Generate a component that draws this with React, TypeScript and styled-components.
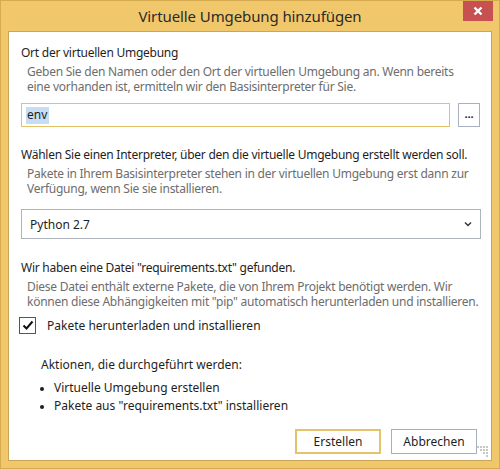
import React from "react";
import styled, { createGlobalStyle } from "styled-components";

const Global = createGlobalStyle`
  html, body { margin: 0; padding: 0; background: #f0c86b; }
  body { font-family: "Segoe UI", "Noto Sans", "Open Sans", sans-serif; }
  * { box-sizing: border-box; }
`;

const Frame = styled.div`
  width: 500px;
  height: 469px;
  background: #f0c86b;
  border: 1px solid #d6ab4f;
  display: flex;
  flex-direction: column;
  padding: 0 7px 7px 7px;
`;

const TitleBar = styled.div`
  height: 30px;
  display: flex;
  align-items: flex-start;
  position: relative;
`;

const Title = styled.div`
  flex: 1;
  text-align: center;
  font-size: 15px;
  color: #2a2a2a;
  padding-top: 5px;
  letter-spacing: -0.1px;
`;

const CloseBtn = styled.div`
  position: absolute;
  right: -1px;
  top: 0;
  width: 30px;
  height: 20px;
  background: #c75050;
  display: flex;
  align-items: center;
  justify-content: center;
`;

const Client = styled.div`
  flex: 1;
  background: #fff;
  border: 1px solid #c9a45a;
  padding: 13px 11px 0 12px;
  display: flex;
  flex-direction: column;
  position: relative;
  font-size: 12px;
  color: #1e1e1e;
`;

const Heading = styled.div`
  font-size: 12px;
  line-height: 16px;
  color: #1e1e1e;
  letter-spacing: -0.25px;
`;

const Desc = styled.div`
  color: #6d6d6d;
  line-height: 15px;
  padding: 3px 0 0 6px;
  letter-spacing: -0.25px;
`;

const Row = styled.div<{ $mt: number }>`
  display: flex;
  gap: 8px;
  margin-top: ${(p) => p.$mt}px;
`;

const Input = styled.div`
  width: 430px;
  height: 24px;
  border: 1px solid #e3c266;
  display: flex;
  align-items: center;
  padding-left: 4px;
`;

const Selected = styled.span`
  background: #c7ddf3;
  color: #1e1e1e;
  padding: 0 2px 1px 1px;
  line-height: 16px;
`;

const SmallBtn = styled.div`
  width: 22px;
  height: 24px;
  border: 1px solid #a9b1c1;
  display: flex;
  align-items: center;
  justify-content: center;
  font-size: 11px;
  font-weight: bold;
  padding-bottom: 4px;
`;

const Select = styled.div`
  margin-top: 13px;
  width: 460px;
  height: 30px;
  border: 1px solid #adb2bb;
  display: flex;
  align-items: center;
  justify-content: space-between;
  padding: 0 8px 0 8px;
`;

const Section = styled.div<{ $mt: number }>`
  margin-top: ${(p) => p.$mt}px;
`;

const CheckRow = styled.label`
  display: flex;
  align-items: center;
  gap: 11px;
  margin-top: 8px;
  margin-left: -2px;
`;

const CheckBox = styled.span`
  width: 17px;
  height: 17px;
  border: 1px solid #555;
  display: flex;
  align-items: center;
  justify-content: center;
`;

const Actions = styled.div`
  margin-top: 22px;
  padding-left: 20px;
`;

const List = styled.ul`
  margin: 6px 0 0 0;
  padding: 0 0 0 13px;
  line-height: 18px;
  li::marker { font-size: 10px; }
`;

const Footer = styled.div`
  margin-top: auto;
  display: flex;
  justify-content: flex-end;
  gap: 10px;
  padding: 0 3px 6px 0;
`;

const Button = styled.div<{ $primary?: boolean }>`
  width: 86px;
  height: 25px;
  border: ${(p) => (p.$primary ? "2px solid #e3c46a" : "1px solid #a6afc0")};
  display: flex;
  align-items: center;
  justify-content: center;
  padding-bottom: 1px;
  color: #1e1e1e;
`;

const Grip = styled.svg`
  position: absolute;
  right: 2px;
  bottom: 2px;
`;

export default function App() {
  const dots: [number, number][] = [];
  for (let r = 0; r < 4; r++) for (let c = 0; c <= r; c++) dots.push([9 - c * 3, r * 3]);
  return (
    <>
      <Global />
      <Frame>
        <TitleBar>
          <Title>Virtuelle Umgebung hinzufügen</Title>
          <CloseBtn>
            <svg width="10" height="10" viewBox="0 0 10 10">
              <path d="M1.5 1.5 L8.5 8.5 M8.5 1.5 L1.5 8.5" stroke="#fff" strokeWidth="2.4" />
            </svg>
          </CloseBtn>
        </TitleBar>
        <Client>
          <Heading>Ort der virtuellen Umgebung</Heading>
          <Desc>
            Geben Sie den Namen oder den Ort der virtuellen Umgebung an. Wenn bereits
            <br />
            eine vorhanden ist, ermitteln wir den Basisinterpreter für Sie.
          </Desc>
          <Row $mt={9}>
            <Input>
              <Selected>env</Selected>
            </Input>
            <SmallBtn>...</SmallBtn>
          </Row>
          <Section $mt={20}>
            <Heading>Wählen Sie einen Interpreter, über den die virtuelle Umgebung erstellt werden soll.</Heading>
            <Desc>
              Pakete in Ihrem Basisinterpreter stehen in der virtuellen Umgebung erst dann zur
              <br />
              Verfügung, wenn Sie sie installieren.
            </Desc>
          </Section>
          <Select>
            <span>Python 2.7</span>
            <svg width="8" height="6" viewBox="0 0 8 6">
              <path d="M1 1.5 L4 4.5 L7 1.5" stroke="#333" strokeWidth="1.4" fill="none" />
            </svg>
          </Select>
          <Section $mt={21}>
            <Heading>Wir haben eine Datei "requirements.txt" gefunden.</Heading>
            <Desc>
              Diese Datei enthält externe Pakete, die von Ihrem Projekt benötigt werden. Wir
              <br />
              können diese Abhängigkeiten mit "pip" automatisch herunterladen und installieren.
            </Desc>
          </Section>
          <CheckRow>
            <CheckBox>
              <svg width="12" height="11" viewBox="0 0 12 11">
                <path d="M1.5 5.5 L4.5 8.5 L10.5 1.5" stroke="#111" strokeWidth="2" fill="none" />
              </svg>
            </CheckBox>
            <span>Pakete herunterladen und installieren</span>
          </CheckRow>
          <Actions>
            <div>Aktionen, die durchgeführt werden:</div>
            <List>
              <li>Virtuelle Umgebung erstellen</li>
              <li>Pakete aus "requirements.txt" installieren</li>
            </List>
          </Actions>
          <Footer>
            <Button $primary>Erstellen</Button>
            <Button>Abbrechen</Button>
          </Footer>
          <Grip width="12" height="12" viewBox="0 0 12 12">
            {dots.map(([x, y], i) => (
              <rect key={i} x={x} y={9 - y} width="2" height="2" fill="#c8c8c8" />
            ))}
          </Grip>
        </Client>
      </Frame>
    </>
  );
}
